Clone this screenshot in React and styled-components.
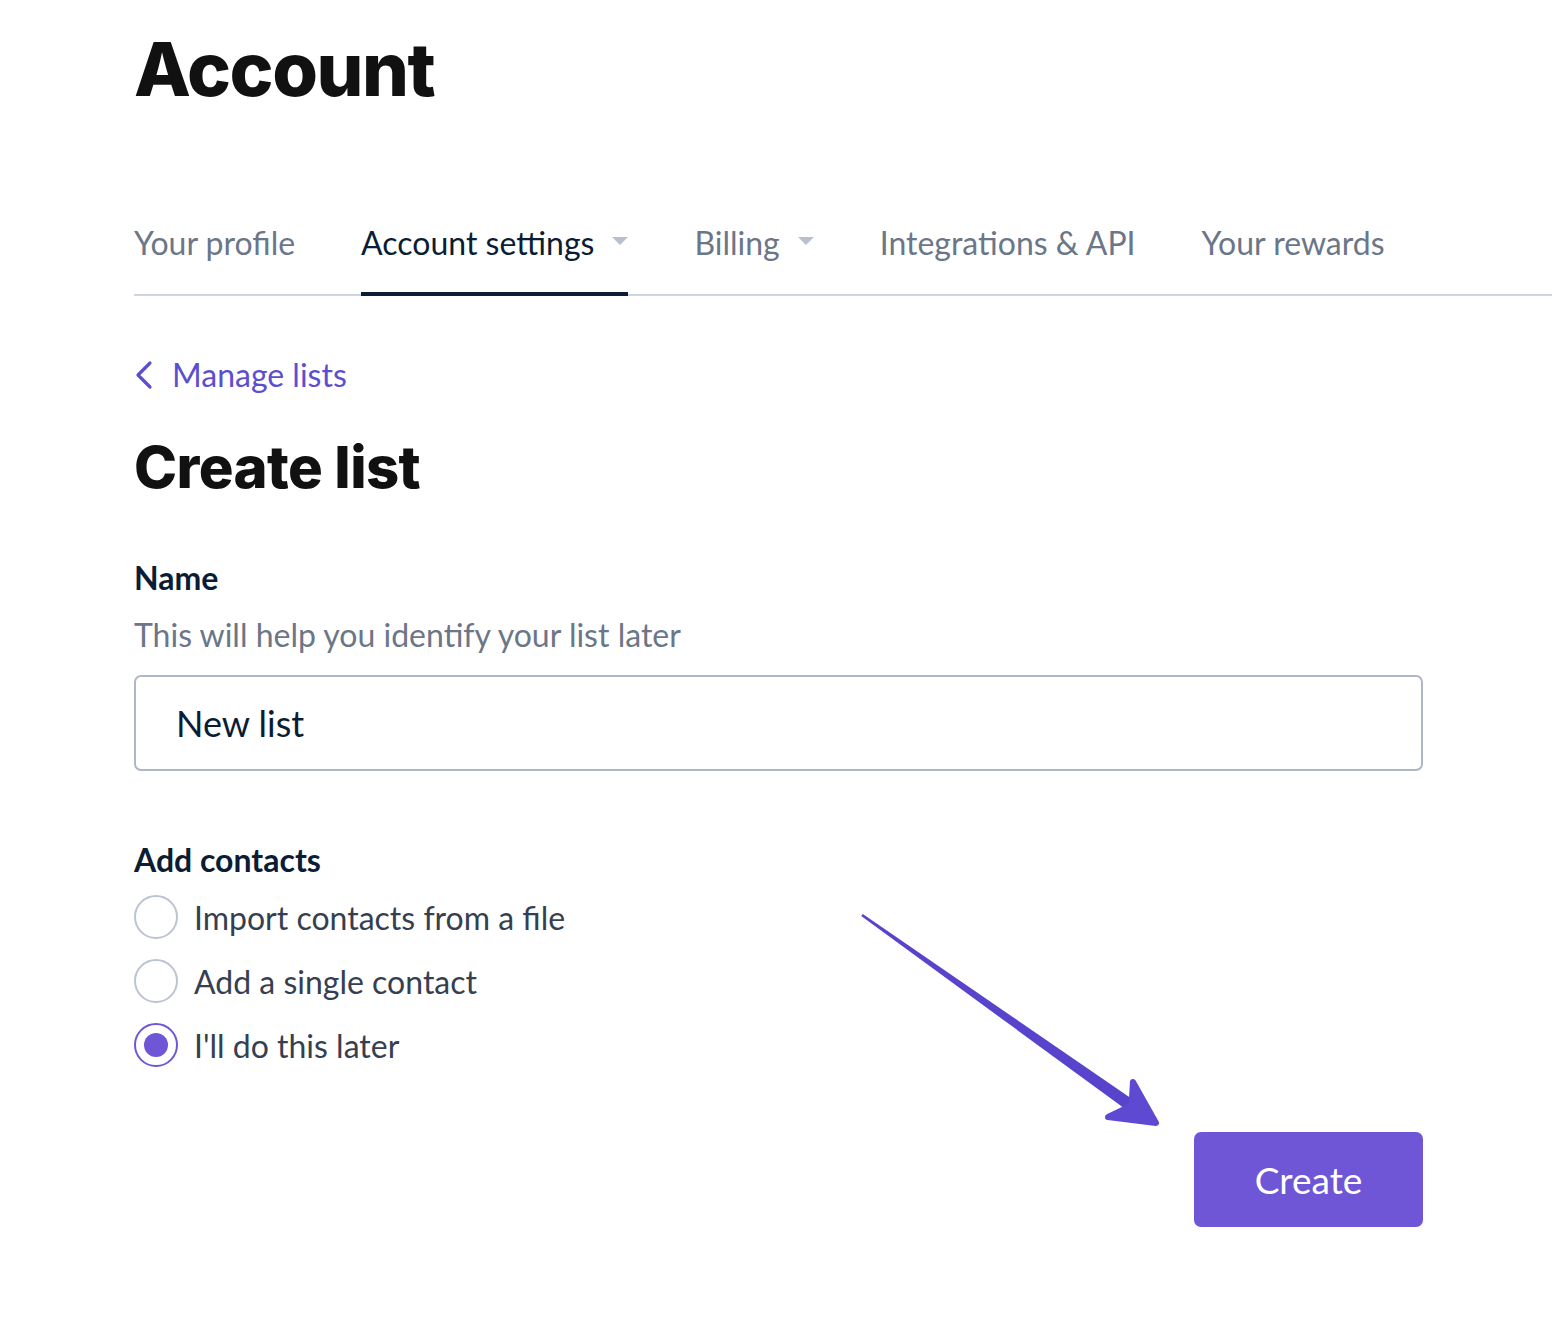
import React, { useState } from 'react';
import styled, { createGlobalStyle } from 'styled-components';

const GlobalStyle = createGlobalStyle`
  body {
    margin: 0;
    background: #ffffff;
    font-family: 'Lato', 'Noto Sans', sans-serif;
  }
`;

const tabs = [
    { label: 'Your profile' },
    { label: 'Account settings', caret: true, active: true },
    { label: 'Billing', caret: true },
    { label: 'Integrations & API' },
    { label: 'Your rewards' },
];

const options = ['Import contacts from a file', 'Add a single contact', "I'll do this later"];

const App = () => {
    const [choice, setChoice] = useState(2);
    const [name, setName] = useState('New list');

    return (
        <Page>
            <GlobalStyle />
            <Title>Account</Title>

            <TabBar>
                {tabs.map((tab) => (
                    <Tab key={tab.label} active={tab.active}>
                        {tab.label}
                        {tab.caret && <Caret />}
                    </Tab>
                ))}
            </TabBar>

            <Form>
                <BackLink href="#">
                    <svg width="20" height="30" viewBox="0 0 20 30" fill="none">
                        <path d="M16 3 L4 15 L16 27" stroke="#5b4fd0" strokeWidth="3.2" strokeLinecap="round" strokeLinejoin="round" />
                    </svg>
                    Manage lists
                </BackLink>

                <SubTitle>Create list</SubTitle>

                <Label>Name</Label>
                <Helper>This will help you identify your list later</Helper>
                <Input value={name} onChange={(e) => setName(e.target.value)} />

                <Label className="contacts">Add contacts</Label>
                <RadioList>
                    {options.map((opt, idx) => (
                        <RadioRow key={opt} onClick={() => setChoice(idx)}>
                            <Radio checked={choice === idx} />
                            {opt}
                        </RadioRow>
                    ))}
                </RadioList>

                <Footer>
                    <CreateButton>Create</CreateButton>
                </Footer>
            </Form>

            {/* annotation arrow pointing at the button */}
            <Arrow width="330" height="240" viewBox="0 0 330 240">
                <polygon points="11.2,16 12.8,14 285,201 278,211" fill="#5843cc" />
                <polygon
                    points="306,223 258,217 281.5,205.7 283,182"
                    fill="#5e4ad2"
                    stroke="#5e4ad2"
                    strokeWidth="6"
                    strokeLinejoin="round"
                />
            </Arrow>
        </Page>
    );
};

export default App;


const Page = styled.div`
position: relative;
min-height: 1344px;
padding-left: 134px;
padding-top: 29px;
box-sizing: border-box;
`;

const Title = styled.h1`
margin: 0;
font-family: 'Inter', 'Liberation Sans', sans-serif;
font-weight: 800;
font-size: 74px;
line-height: 80px;
letter-spacing: -1.5px;
color: #111111;
`;

const TabBar = styled.div`
margin-top: 114px;
display: flex;
gap: 66px;
border-bottom: 2px solid #cfd6e0;
`;

const Tab = styled.div`
display: flex;
align-items: center;
gap: 18px;
font-size: 32px;
line-height: 40px;
padding-bottom: 29px;
margin-bottom: -2px;
border-bottom: 4px solid ${(props) => props.active ? '#0b1d35' : 'transparent'};
color: ${(props) => props.active ? '#0b1d35' : '#6b7688'};
cursor: pointer;
`;

const Caret = styled.span`
width: 0;
height: 0;
border-left: 8px solid transparent;
border-right: 8px solid transparent;
border-top: 8px solid #b9c0cb;
margin-top: -4px;
`;

const Form = styled.div`
width: 1289px;
display: flex;
flex-direction: column;
`;

const BackLink = styled.a`
margin-top: 59px;
display: flex;
align-items: center;
gap: 18px;
font-size: 32px;
line-height: 40px;
color: #5b4fd0;
text-decoration: none;
align-self: flex-start;
`;

const SubTitle = styled.h2`
margin: 40px 0 0;
font-family: 'Inter', 'Liberation Sans', sans-serif;
font-weight: 800;
font-size: 58px;
line-height: 64px;
letter-spacing: -0.6px;
color: #111111;
`;

const Label = styled.div`
margin-top: 59px;
font-weight: 700;
font-size: 32px;
line-height: 40px;
color: #0b1d35;

&.contacts {
    margin-top: 69px;
}
`;

const Helper = styled.div`
margin-top: 17px;
font-size: 32px;
line-height: 40px;
color: #6b7688;
`;

const Input = styled.input`
margin-top: 20px;
height: 96px;
box-sizing: border-box;
border: 2px solid #aeb7c5;
border-radius: 7px;
padding: 0 40px;
font-family: 'Lato', 'Noto Sans', sans-serif;
font-size: 36px;
color: #0b1d35;
outline: none;
`;

const RadioList = styled.div`
margin-top: 5px;
display: flex;
flex-direction: column;
`;

const RadioRow = styled.label`
display: flex;
align-items: center;
gap: 16px;
height: 64px;
font-size: 32px;
color: #363f50;
cursor: pointer;
`;

const Radio = styled.span`
width: 44px;
height: 44px;
box-sizing: border-box;
border-radius: 50%;
border: 2px solid ${(props) => props.checked ? '#6e56d6' : '#bcc3d1'};
display: flex;
align-items: center;
justify-content: center;

&::after {
    content: '';
    width: 24px;
    height: 24px;
    border-radius: 50%;
    background: #6e56d6;
    display: ${(props) => props.checked ? 'block' : 'none'};
}
`;

const Footer = styled.div`
margin-top: 55px;
display: flex;
justify-content: flex-end;
`;

const CreateButton = styled.button`
width: 229px;
height: 95px;
border: none;
border-radius: 7px;
background-color: #6e56d6;
color: #ffffff;
font-family: 'Lato', 'Noto Sans', sans-serif;
font-size: 37px;
cursor: pointer;
`;

const Arrow = styled.svg`
position: absolute;
left: 850px;
top: 900px;
pointer-events: none;
`;
